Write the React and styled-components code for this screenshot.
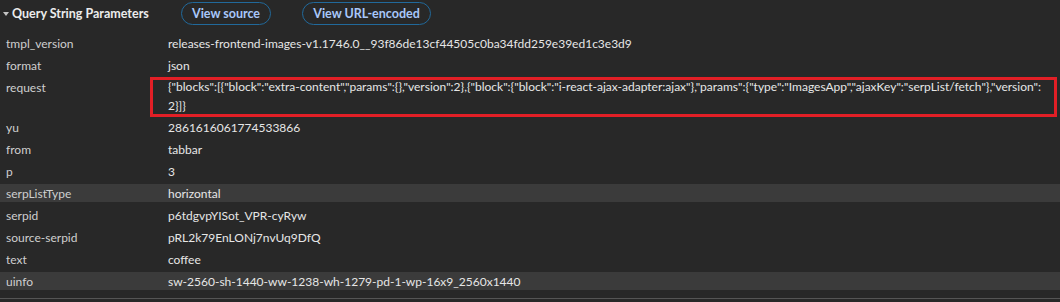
import React from "react";
import styled, { createGlobalStyle } from "styled-components";

const Global = createGlobalStyle`
  html, body { margin: 0; padding: 0; background: #282828; }
  body { font-family: Lato, "Noto Sans", sans-serif; font-size: 12px; }
`;

const Panel = styled.section`
  width: 1060px;
  height: 302px;
  background: #282828;
  display: flex;
  flex-direction: column;
  overflow: hidden;
`;

const Header = styled.div`
  height: 27px;
  display: flex;
  align-items: center;
  padding-left: 3px;
  margin-bottom: 7px;
`;

const Title = styled.div`
  display: flex;
  align-items: center;
  gap: 3px;
  width: 176px;
  color: #ececec;
  font-weight: 700;
  font-size: 12.5px;
`;

const Caret = styled.span`
  width: 0;
  height: 0;
  border-left: 3px solid transparent;
  border-right: 3px solid transparent;
  border-top: 4px solid #c4c4c4;
`;

const Buttons = styled.div`
  display: flex;
  gap: 31px;
  margin-left: 2px;
`;

const PillButton = styled.button`
  height: 23px;
  width: ${(p) => p.$w}px;
  border: 1px solid #21699b;
  border-radius: 12px;
  background: transparent;
  color: #a8c7fa;
  font-family: inherit;
  font-size: 12.5px;
  font-weight: 700;
  padding: 0;
`;

const Rows = styled.div`
  display: flex;
  flex-direction: column;
  gap: 4px;
`;

const Row = styled.div`
  position: relative;
  display: grid;
  grid-template-columns: 168px 1fr;
  min-height: 18px;
  line-height: 19px;
  background: ${(p) => (p.$hl ? "#3b3b3b" : "transparent")};
`;

const Key = styled.div`
  padding-left: 6px;
  color: #cfcfcf;
  line-height: 18px;
  padding-top: 1px;
  height: 17px;
`;

const Value = styled.div`
  color: #e6e6e6;
  white-space: nowrap;
  display: flex;
  flex-direction: column;
  justify-content: center;
  height: ${(p) => (p.$lines > 1 ? 36 : 18)}px;
`;

const Line = styled.div`
  white-space: nowrap;
  line-height: 18px;
  margin-top: 1px;
`;

const Marker = styled.div`
  position: absolute;
  left: 150px;
  top: -1px;
  width: 907px;
  height: 40px;
  box-sizing: border-box;
  border: 3px solid #e21f26;
  pointer-events: none;
`;

const Divider = styled.div`
  margin-top: 8px;
  height: 1px;
  background: #555555;
`;

const params = [
  ["tmpl_version", ["releases-frontend-images-v1.1746.0__93f86de13cf44505c0ba34fdd259e39ed1c3e3d9"]],
  ["format", ["json"]],
  [
    "request",
    [
      '{"blocks":[{"block":"extra-content","params":{},"version":2},{"block":{"block":"i-react-ajax-adapter:ajax"},"params":{"type":"ImagesApp","ajaxKey":"serpList/fetch"},"version":',
      "2}]}",
    ],
    false,
    true,
  ],
  ["yu", ["2861616061774533866"]],
  ["from", ["tabbar"]],
  ["p", ["3"]],
  ["serpListType", ["horizontal"], true],
  ["serpid", ["p6tdgvpYISot_VPR-cyRyw"]],
  ["source-serpid", ["pRL2k79EnLONj7nvUq9DfQ"]],
  ["text", ["coffee"]],
  ["uinfo", ["sw-2560-sh-1440-ww-1238-wh-1279-pd-1-wp-16x9_2560x1440"], true],
];

export default function App() {
  return (
    <>
      <Global />
      <Panel>
        <Header>
          <Title>
            <Caret />
            Query String Parameters
          </Title>
          <Buttons>
            <PillButton $w={90}>View source</PillButton>
            <PillButton $w={129}>View URL-encoded</PillButton>
          </Buttons>
        </Header>
        <Rows>
          {params.map(([k, v, hl, marked]) => (
            <Row key={k} $hl={hl}>
              <Key>{k}</Key>
              <Value $lines={v.length}>
                {v.map((l, i) => (
                  <Line key={i}>{l}</Line>
                ))}
              </Value>
              {marked && <Marker />}
            </Row>
          ))}
        </Rows>
        <Divider />
      </Panel>
    </>
  );
}
